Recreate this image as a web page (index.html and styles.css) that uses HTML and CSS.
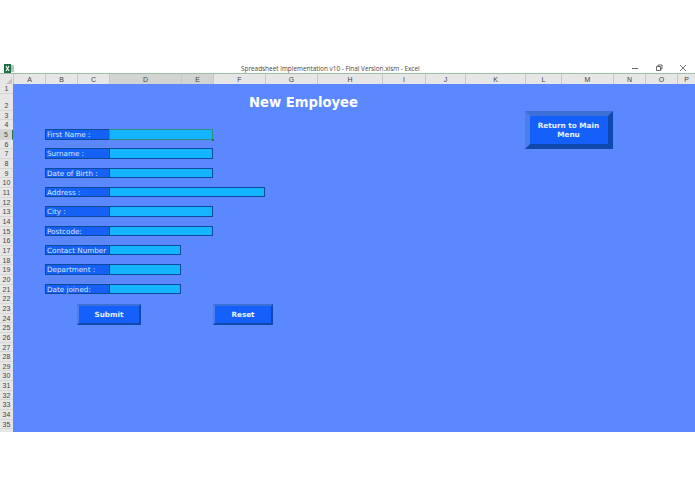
FILE: index.html
```html
<!DOCTYPE html>
<html lang="en">
<head>
    <meta charset="UTF-8">
    <title>New Employee</title>
    <link rel="stylesheet" href="styles.css">
</head>
<body>
    <div class="window">
        <div class="title-bar">
            <svg class="app-icon" width="10" height="9" viewBox="0 0 10 9">
                <rect x="4" y="1" width="6" height="7" fill="#a9cdb6"/>
                <rect x="0" y="0" width="7" height="9" fill="#1d6f42"/>
                <path d="M2 2 L5 7 M5 2 L2 7" stroke="#fff" stroke-width="1.1"/>
            </svg>
            <div class="doc-title">Spreadsheet Implementation v10 - Final Version.xlsm - Excel</div>
            <div class="win-controls">
                <svg width="8" height="8" viewBox="0 0 8 8"><path d="M1 4.5 H7" stroke="#666" stroke-width="1"/></svg>
                <svg width="8" height="8" viewBox="0 0 8 8"><path d="M1.5 2.5 H5.5 V6.5 H1.5 Z M3 2.5 V1 H7 V5 H5.5" fill="none" stroke="#555" stroke-width="0.9"/></svg>
                <svg width="8" height="8" viewBox="0 0 8 8"><path d="M1 1 L7 7 M7 1 L1 7" stroke="#666" stroke-width="0.9"/></svg>
            </div>
        </div>

        <div class="col-heads">
            <div class="corner"><svg width="7" height="7" viewBox="0 0 7 7"><path d="M7 0 V7 H0 Z" fill="#c4c4c4"/></svg></div>
            <div class="col">A</div>
            <div class="col">B</div>
            <div class="col">C</div>
            <div class="col selected">D</div>
            <div class="col selected">E</div>
            <div class="col">F</div>
            <div class="col">G</div>
            <div class="col">H</div>
            <div class="col">I</div>
            <div class="col">J</div>
            <div class="col">K</div>
            <div class="col">L</div>
            <div class="col">M</div>
            <div class="col">N</div>
            <div class="col">O</div>
            <div class="col">P</div>
        </div>

        <div class="sheet">
            <div class="row-heads">
                <div class="row-num">1</div>
                <div class="row-num tall">2</div>
                <div class="row-num">3</div>
                <div class="row-num">4</div>
                <div class="row-num selected">5</div>
                <div class="row-num">6</div>
                <div class="row-num">7</div>
                <div class="row-num">8</div>
                <div class="row-num">9</div>
                <div class="row-num">10</div>
                <div class="row-num">11</div>
                <div class="row-num">12</div>
                <div class="row-num">13</div>
                <div class="row-num">14</div>
                <div class="row-num">15</div>
                <div class="row-num">16</div>
                <div class="row-num">17</div>
                <div class="row-num">18</div>
                <div class="row-num">19</div>
                <div class="row-num">20</div>
                <div class="row-num">21</div>
                <div class="row-num">22</div>
                <div class="row-num">23</div>
                <div class="row-num">24</div>
                <div class="row-num">25</div>
                <div class="row-num">26</div>
                <div class="row-num">27</div>
                <div class="row-num">28</div>
                <div class="row-num">29</div>
                <div class="row-num">30</div>
                <div class="row-num">31</div>
                <div class="row-num">32</div>
                <div class="row-num">33</div>
                <div class="row-num">34</div>
                <div class="row-num">35</div>
            </div>

            <div class="canvas">
                <div class="form-area">
                    <h1>New Employee</h1>
                    <div class="form-rows">
                        <div class="form-row">
                            <div class="label">First Name :</div>
                            <div class="field medium active"><span class="handle"></span></div>
                        </div>
                        <div class="form-row">
                            <div class="label">Surname :</div>
                            <div class="field medium"></div>
                        </div>
                        <div class="form-row">
                            <div class="label">Date of Birth :</div>
                            <div class="field medium"></div>
                        </div>
                        <div class="form-row">
                            <div class="label">Address :</div>
                            <div class="field long"></div>
                        </div>
                        <div class="form-row">
                            <div class="label">City :</div>
                            <div class="field medium"></div>
                        </div>
                        <div class="form-row">
                            <div class="label">Postcode:</div>
                            <div class="field medium"></div>
                        </div>
                        <div class="form-row">
                            <div class="label">Contact Number</div>
                            <div class="field short"></div>
                        </div>
                        <div class="form-row">
                            <div class="label">Department :</div>
                            <div class="field short"></div>
                        </div>
                        <div class="form-row">
                            <div class="label">Date joined:</div>
                            <div class="field short"></div>
                        </div>
                    </div>
                    <div class="form-buttons">
                        <div class="bevel-button submit">Submit</div>
                        <div class="bevel-button reset">Reset</div>
                    </div>
                </div>
                <div class="bevel-button menu-button">Return to Main Menu</div>
            </div>
        </div>
    </div>
</body>
</html>
```

FILE: styles.css
```css
body {
    margin: 0;
    background-color: #ffffff;
    font-family: "DejaVu Sans", Verdana, sans-serif;
}

.window {
    width: 695px;
    height: 494px;
    padding-top: 62px;
    box-sizing: border-box;
    overflow: hidden;
}

.title-bar {
    height: 12px;
    display: flex;
    align-items: center;
    padding: 1px 0 0 4px;
    box-sizing: border-box;
    border-bottom: 1px solid #9dbfa9;
}

.doc-title {
    flex: 1;
    margin-left: 227px;
    font-family: "Open Sans", sans-serif;
    font-size: 6.4px;
    color: #444444;
    white-space: nowrap;
}

.win-controls {
    display: flex;
    gap: 16px;
    padding-right: 8px;
}

.col-heads {
    height: 10px;
    display: grid;
    grid-template-columns: 13px 32px 32px 32px 72px 32px 52px 52px 65px 43px 40px 60px 36px 52px 32px 32px 18px;
    background-color: #e6e6e6;
}

.corner {
    display: flex;
    align-items: flex-end;
    justify-content: flex-end;
    padding: 0 1px 1px 0;
}

.col {
    border-left: 1px solid #c6c6c6;
    box-sizing: border-box;
    font-family: "Liberation Sans", sans-serif;
    font-size: 7px;
    line-height: 11px;
    text-align: center;
    color: #444444;
}

.col.selected {
    background-color: #d2d4d2;
    border-bottom: 1px solid #217346;
}

.sheet {
    height: 348px;
    display: flex;
}

.row-heads {
    width: 13px;
    background-color: #e6e6e6;
}

.row-num {
    height: 9.67px;
    box-sizing: border-box;
    border-bottom: 1px solid #d6d6d6;
    font-family: "Liberation Sans", sans-serif;
    font-size: 7px;
    line-height: 9.67px;
    text-align: center;
    color: #444444;
}

.row-num.tall {
    height: 17.1px;
    line-height: 24px;
}

.row-num.selected {
    background-color: #d2d4d2;
    border-right: 1px solid #217346;
}

.canvas {
    flex: 1;
    display: flex;
    align-items: flex-start;
    background-color: #5b87ff;
}

.form-area {
    width: 511.5px;
    padding-left: 32px;
    box-sizing: border-box;
}

h1 {
    margin: 11px 0 0 204px;
    font-size: 13.2px;
    line-height: 15px;
    font-weight: bold;
    color: #ffffff;
    white-space: nowrap;
}

.form-rows {
    display: flex;
    flex-direction: column;
    gap: 8.83px;
    margin-top: 19px;
}

.form-row {
    display: flex;
    height: 10.5px;
}

.label {
    width: 64px;
    box-sizing: border-box;
    background-color: #1560f5;
    border: 1px solid #0e4a9c;
    border-right-width: 0;
    padding-left: 1px;
    font-size: 7.2px;
    line-height: 9px;
    color: #dbe8ff;
    white-space: nowrap;
}

.field {
    position: relative;
    box-sizing: border-box;
    background-color: #14b4ff;
    border: 1px solid #0e4a9c;
}

.field.medium {
    width: 104px;
}

.field.long {
    width: 156px;
}

.field.short {
    width: 72px;
}

.field.active {
    border-color: #2f8f7f;
}

.handle {
    position: absolute;
    right: -2px;
    bottom: -2px;
    width: 2px;
    height: 2px;
    background-color: #217346;
}

.form-buttons {
    display: flex;
    margin-top: 10px;
    padding-left: 32px;
    gap: 72px;
}

.bevel-button {
    box-sizing: border-box;
    display: flex;
    align-items: center;
    justify-content: center;
    text-align: center;
    background-color: #1560fb;
    border-style: solid;
    border-color: #3c6fd8 #0f49ae #0f49ae #4a80ea;
    font-weight: bold;
    color: #e8f0ff;
}

.submit,
.reset {
    height: 21px;
    border-width: 2px;
    font-size: 7.2px;
}

.submit {
    width: 64px;
}

.reset {
    width: 60px;
}

.menu-button {
    width: 88px;
    height: 38px;
    margin-top: 27px;
    border-width: 5px;
    font-size: 7.3px;
    line-height: 9.5px;
}
```
